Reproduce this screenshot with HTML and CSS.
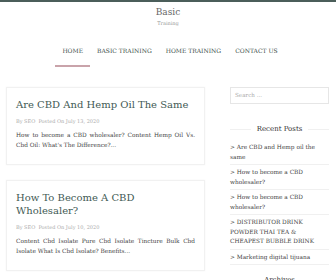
FILE: index.html
```html
<!DOCTYPE html>
<html lang="en">
<head>
    <meta charset="UTF-8">
    <title>Basic Training</title>
    <link rel="stylesheet" href="styles.css">
</head>
<body>
<div class="topbar"></div>
<header class="header">
    <div class="site-title">Basic</div>
    <div class="site-desc">Training</div>
</header>
<nav class="nav">
    <ul>
        <li class="active"><a href="#">HOME</a></li>
        <li><a href="#">BASIC TRAINING</a></li>
        <li><a href="#">HOME TRAINING</a></li>
        <li><a href="#">CONTACT US</a></li>
    </ul>
</nav>
<div class="wrap">
    <main class="main">
        <article class="post">
            <h2 class="post-title">Are CBD And Hemp Oil The Same</h2>
            <div class="meta">By SEO &nbsp;Posted On July 13, 2020</div>
            <p class="excerpt">How to become a CBD wholesaler? Content Hemp Oil Vs. Cbd Oil: What's The Difference?...</p>
        </article>
        <article class="post">
            <h2 class="post-title">How To Become A CBD Wholesaler?</h2>
            <div class="meta">By SEO &nbsp;Posted On July 10, 2020</div>
            <p class="excerpt">Content Cbd Isolate Pure Cbd Isolate Tincture Bulk Cbd Isolate What Is Cbd Isolate? Benefits...</p>
        </article>
    </main>
    <aside class="sidebar">
        <div class="search">Search ...</div>
        <h3 class="widget-title"><span>Recent Posts</span></h3>
        <ul class="recent">
            <li>&gt; Are CBD and Hemp oil the same</li>
            <li>&gt; How to become a CBD wholesaler?</li>
            <li>&gt; How to become a CBD wholesaler?</li>
            <li>&gt; DISTRIBUTOR DRINK POWDER THAI TEA &amp; CHEAPEST BUBBLE DRINK</li>
            <li>&gt; Marketing digital tijuana</li>
        </ul>
        <h3 class="widget-title"><span>Archives</span></h3>
    </aside>
</div>
</body>
</html>
```

FILE: styles.css
```css
*{
    margin:0;
    padding:0;
    list-style: none;
    box-sizing: border-box;
}
body{
    font-family: "DejaVu Serif", "Liberation Serif", serif;
    background: #fff;
    color: #444;
    overflow: hidden;
}
.topbar{
    height: 2px;
    background: #4b5e5a;
}
.header{
    text-align: center;
    padding-top: 4px;
}
.site-title{
    font-size: 9px;
    line-height: 12px;
    color: #666;
}
.site-desc{
    font-size: 5px;
    line-height: 10px;
    color: #999;
}
.nav{
    margin-top: 16px;
}
.nav ul{
    display: flex;
    justify-content: center;
    padding-left: 4px;
}
.nav li{
    padding: 0 7px;
    height: 23px;
}
.nav li a{
    display: block;
    font-size: 6px;
    line-height: 14px;
    color: #3e4f4b;
    text-decoration: none;
}
.nav li.active{
    border-bottom: 2px solid #c9a3aa;
}
.wrap{
    display: flex;
    padding: 20px 7px 0 6px;
    gap: 25px;
}
.main{
    width: 199px;
    flex: none;
}
.post{
    border: 1px solid #f1f1f1;
    box-shadow: 0 0 2px rgba(0,0,0,0.04);
    padding: 10px 9px 14px;
    margin-bottom: 15px;
}
.post-title{
    font-weight: normal;
    font-size: 10px;
    line-height: 13.5px;
    color: #3f5a54;
}
.meta{
    font-size: 5px;
    color: #aaa;
    margin-top: 6px;
}
.excerpt{
    font-size: 5.8px;
    line-height: 10px;
    color: #444;
    margin-top: 6px;
    text-align: justify;
}
.sidebar{
    flex: 1;
}
.search{
    border: 1px solid #e6e6e6;
    height: 17px;
    font-size: 5.6px;
    line-height: 15px;
    color: #aaa;
    padding-left: 4px;
}
.widget-title{
    display: flex;
    align-items: center;
    gap: 6px;
    font-weight: normal;
    font-size: 7px;
    color: #333;
    margin: 21px 0 10px;
}
.widget-title::before,
.widget-title::after{
    content: "";
    flex: 1;
    border-top: 1px solid #f0f0f0;
}
.recent li{
    font-size: 5.8px;
    line-height: 9.5px;
    color: #444;
    border-bottom: 1px solid #f0f0f0;
    padding: 0 0 2px;
    margin-bottom: 3px;
}
.recent + .widget-title{
    margin-top: 11px;
}
```
